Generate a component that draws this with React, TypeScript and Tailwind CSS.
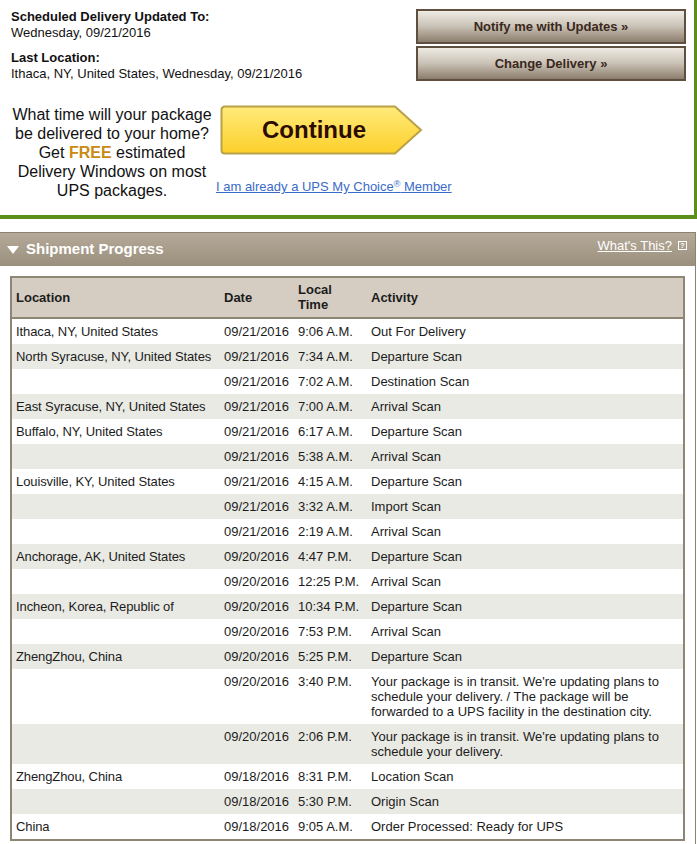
import React from 'react';

type Row = [string, string, string, string];

const rows: Row[] = [
  ['Ithaca, NY, United States', '09/21/2016', '9:06 A.M.', 'Out For Delivery'],
  ['North Syracuse, NY, United States', '09/21/2016', '7:34 A.M.', 'Departure Scan'],
  ['', '09/21/2016', '7:02 A.M.', 'Destination Scan'],
  ['East Syracuse, NY, United States', '09/21/2016', '7:00 A.M.', 'Arrival Scan'],
  ['Buffalo, NY, United States', '09/21/2016', '6:17 A.M.', 'Departure Scan'],
  ['', '09/21/2016', '5:38 A.M.', 'Arrival Scan'],
  ['Louisville, KY, United States', '09/21/2016', '4:15 A.M.', 'Departure Scan'],
  ['', '09/21/2016', '3:32 A.M.', 'Import Scan'],
  ['', '09/21/2016', '2:19 A.M.', 'Arrival Scan'],
  ['Anchorage, AK, United States', '09/20/2016', '4:47 P.M.', 'Departure Scan'],
  ['', '09/20/2016', '12:25 P.M.', 'Arrival Scan'],
  ['Incheon, Korea, Republic of', '09/20/2016', '10:34 P.M.', 'Departure Scan'],
  ['', '09/20/2016', '7:53 P.M.', 'Arrival Scan'],
  ['ZhengZhou, China', '09/20/2016', '5:25 P.M.', 'Departure Scan'],
  ['', '09/20/2016', '3:40 P.M.', "Your package is in transit. We're updating plans to schedule your delivery. / The package will be forwarded to a UPS facility in the destination city."],
  ['', '09/20/2016', '2:06 P.M.', "Your package is in transit. We're updating plans to schedule your delivery."],
  ['ZhengZhou, China', '09/18/2016', '8:31 P.M.', 'Location Scan'],
  ['', '09/18/2016', '5:30 P.M.', 'Origin Scan'],
  ['China', '09/18/2016', '9:05 A.M.', 'Order Processed: Ready for UPS'],
];

const BrownButton: React.FC<{ label: string }> = ({ label }) => (
  <button className="h-[35px] w-full border-2 border-[#5f4f3f] bg-gradient-to-b from-[#eeebe4] via-[#c9c1b5] to-[#8c7e6d] text-[13px] font-bold text-[#3a281c]">
    {label}
  </button>
);

const ContinueButton: React.FC = () => (
  <div className="relative h-[50px] w-[203px]">
    <svg width="203" height="50" viewBox="0 0 203 50">
      <defs>
        <linearGradient id="cont" x1="0" y1="0" x2="0" y2="1">
          <stop offset="0" stopColor="#ffea7a" />
          <stop offset="1" stopColor="#fcd02a" />
        </linearGradient>
      </defs>
      <path d="M5 1.5 H175 L201 25 L175 48.5 H5 Q1.5 48.5 1.5 45 V5 Q1.5 1.5 5 1.5 Z" fill="url(#cont)" stroke="#b9a148" strokeWidth="2" />
    </svg>
    <span className="absolute left-0 top-0 flex h-[50px] w-[188px] items-center justify-center text-[24px] font-bold text-[#2a0c00]">
      Continue
    </span>
  </div>
);

export default function App() {
  return (
    <div className="w-[697px] bg-white font-['Liberation_Sans',Arial,sans-serif] text-[13px] text-[#111]">
      <div className="border-b-4 border-r-[3px] border-[#5b8f1b] pb-[15px]">
        <div className="flex items-start justify-between pl-[11px] pr-[8px] pt-[9px]">
          <div className="leading-[16px]">
            <p className="font-bold">Scheduled Delivery Updated To:</p>
            <p>Wednesday, 09/21/2016</p>
            <p className="mt-[9px] font-bold">Last Location:</p>
            <p>Ithaca, NY, United States, Wednesday, 09/21/2016</p>
          </div>
          <div className="flex w-[270px] flex-col gap-[2px]">
            <BrownButton label="Notify me with Updates »" />
            <BrownButton label="Change Delivery »" />
          </div>
        </div>
        <div className="mt-[23px] flex items-start">
          <p className="ml-[12px] w-[200px] text-center text-[16px] leading-[19px] text-[#111]">
            What time will your package<br />
            be delivered to your home?<br />
            Get <span className="font-bold text-[#c98a12]">FREE</span> estimated<br />
            Delivery Windows on most<br />
            UPS packages.
          </p>
          <div className="ml-[8px] flex flex-col">
            <ContinueButton />
            <a href="#" className="-ml-[4px] mt-[24px] leading-[16px] text-[#3a6bc8] underline">
              I am already a UPS My Choice<sup className="text-[9px]">®</sup> Member
            </a>
          </div>
        </div>
      </div>

      <div className="mt-[13px] w-[696px] border-r border-t border-[#8d8272] pb-[20px]">
        <div className="flex h-[33px] items-center justify-between bg-gradient-to-b from-[#b5aa99] to-[#9b8f7d] pl-[7px] pr-[8px]">
          <div className="flex items-center">
            <svg width="12" height="8" viewBox="0 0 12 8">
              <path d="M0 0 H12 L6 8 Z" fill="#fff" />
            </svg>
            <span className="ml-[7px] text-[15px] font-bold text-white">Shipment Progress</span>
          </div>
          <div className="-mt-[8px] flex items-center">
            <a href="#" className="text-[13px] text-white underline">What's This?</a>
            <span className="ml-[6px] flex h-[9px] w-[9px] items-center justify-center border border-white text-[7px] font-bold leading-none text-white">?</span>
          </div>
        </div>

        <div className="mx-[10px] mt-[10px] border-2 border-[#8f8575]">
          <table className="w-full table-fixed border-collapse text-left text-[13px] leading-[15px] text-[#1c1c1c]">
            <colgroup>
              <col className="w-[208px]" />
              <col className="w-[74px]" />
              <col className="w-[73px]" />
              <col />
            </colgroup>
            <thead>
              <tr className="border-b-2 border-[#8f8575] bg-[#d5cdc1]">
                <th className="pb-[5px] pl-[4px] pr-[2px] pt-[4px] font-bold">Location</th>
                <th className="px-[4px] pb-[5px] pt-[4px] font-bold">Date</th>
                <th className="px-[4px] pb-[5px] pt-[4px] font-bold">Local<br />Time</th>
                <th className="px-[4px] pb-[5px] pt-[4px] font-bold">Activity</th>
              </tr>
            </thead>
            <tbody>
              {rows.map((r, i) => (
                <tr key={i} className={i % 2 === 1 ? 'bg-[#eaeae4]' : 'bg-white'}>
                  <td className="whitespace-nowrap py-[5px] pl-[4px] pr-[2px] align-top tracking-[-0.1px]">{r[0]}</td>
                  <td className="whitespace-nowrap px-[4px] py-[5px] align-top">{r[1]}</td>
                  <td className="whitespace-nowrap px-[4px] py-[5px] align-top">{r[2]}</td>
                  <td className="py-[5px] pl-[4px] pr-[20px] align-top">{r[3]}</td>
                </tr>
              ))}
            </tbody>
          </table>
        </div>
      </div>
    </div>
  );
}
